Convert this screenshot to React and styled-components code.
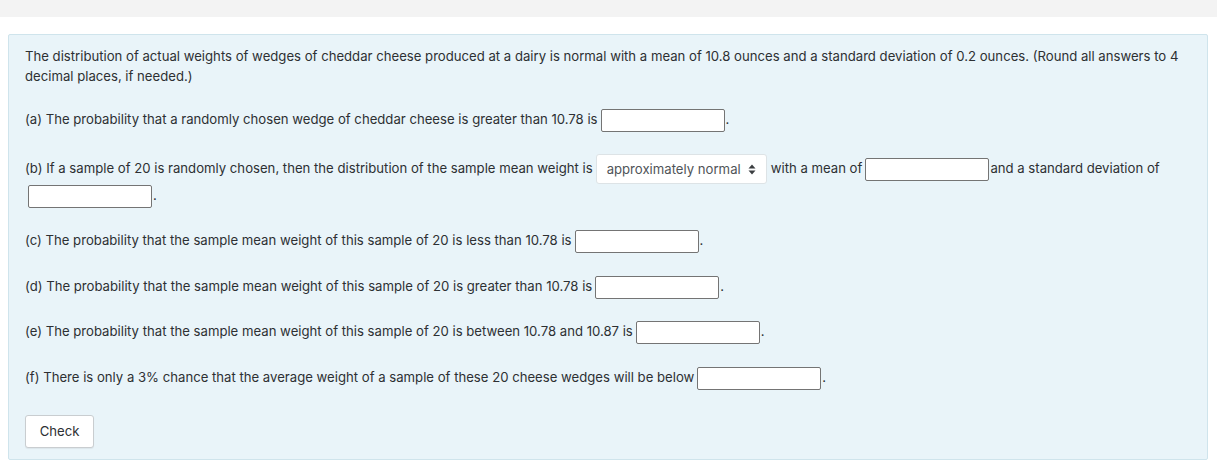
import React from "react";
import styled, { createGlobalStyle } from "styled-components";

const GlobalStyle = createGlobalStyle`
  body {
    margin: 0;
    background: #fff;
    font-family: Inter, "Noto Sans", sans-serif;
    font-size: 13.15px;
    color: #2d3033;
  }
`;

const TopBar = styled.div`
  height: 17px;
  background: #f3f3f3;
`;

const Page = styled.div`
  padding: 17px 9px 0 8px;
`;

const Panel = styled.section`
  background: #e9f4f9;
  border: 1px solid #cfe4ec;
  border-radius: 2px;
  padding: 11px 16px 11px 16px;
`;

const Para = styled.p`
  margin: 0 0 ${(p) => p.$gap || 20}px;
  line-height: ${(p) => p.$line || 21}px;
`;

const Blank = styled.input`
  box-sizing: border-box;
  width: 124px;
  height: 23px;
  border: 1px solid #747474;
  border-radius: 2px;
  background: #fff;
  vertical-align: middle;
  margin: 0 1px 0 3px;
  padding: 0 4px;
  font: inherit;
`;

const SelectBox = styled.span`
  display: inline-flex;
  align-items: center;
  gap: 7px;
  box-sizing: border-box;
  height: 30px;
  padding: 0 10px 0 10px;
  margin: 0 4px 0 3px;
  background: #fff;
  border: 1px solid #dde3e6;
  border-radius: 3px;
  color: #505458;
  vertical-align: middle;
`;

const Arrows = () => (
  <svg width="8" height="11" viewBox="0 0 8 11">
    <path d="M4 0.5 L7.5 4.5 H0.5 Z M4 10.5 L7.5 6.5 H0.5 Z" fill="#3a3d40" />
  </svg>
);

const CheckButton = styled.button`
  margin-top: 11px;
  height: 33px;
  width: 69px;
  background: #fff;
  border: 1px solid #c9cdd0;
  border-radius: 3px;
  box-shadow: 0 1px 1px rgba(0, 0, 0, 0.06);
  font: inherit;
  color: #2d3033;
`;

const App = () => (
  <>
    <GlobalStyle />
    <TopBar />
    <Page>
      <Panel>
        <Para $gap={23} $line={20}>
          The distribution of actual weights of wedges of cheddar cheese produced at a dairy is normal with a mean of 10.8 ounces and a standard deviation of 0.2 ounces. (Round all answers to 4 decimal places, if needed.)
        </Para>
        <Para $gap={22}>
          (a) The probability that a randomly chosen wedge of cheddar cheese is greater than 10.78 is
          <Blank />.
        </Para>
        <Para $gap={22} $line={22}>
          (b) If a sample of 20 is randomly chosen, then the distribution of the sample mean weight is
          <SelectBox>
            approximately normal <Arrows />
          </SelectBox>
          with a mean of
          <Blank />
          and a standard deviation of <Blank />.
        </Para>
        <Para $gap={23}>
          (c) The probability that the sample mean weight of this sample of 20 is less than 10.78 is
          <Blank />.
        </Para>
        <Para $gap={22}>
          (d) The probability that the sample mean weight of this sample of 20 is greater than 10.78 is
          <Blank />.
        </Para>
        <Para $gap={23}>
          (e) The probability that the sample mean weight of this sample of 20 is between 10.78 and 10.87 is
          <Blank />.
        </Para>
        <Para $gap={14}>
          (f) There is only a 3% chance that the average weight of a sample of these 20 cheese wedges will be below
          <Blank />.
        </Para>
        <CheckButton>Check</CheckButton>
      </Panel>
    </Page>
  </>
);

export default App;
